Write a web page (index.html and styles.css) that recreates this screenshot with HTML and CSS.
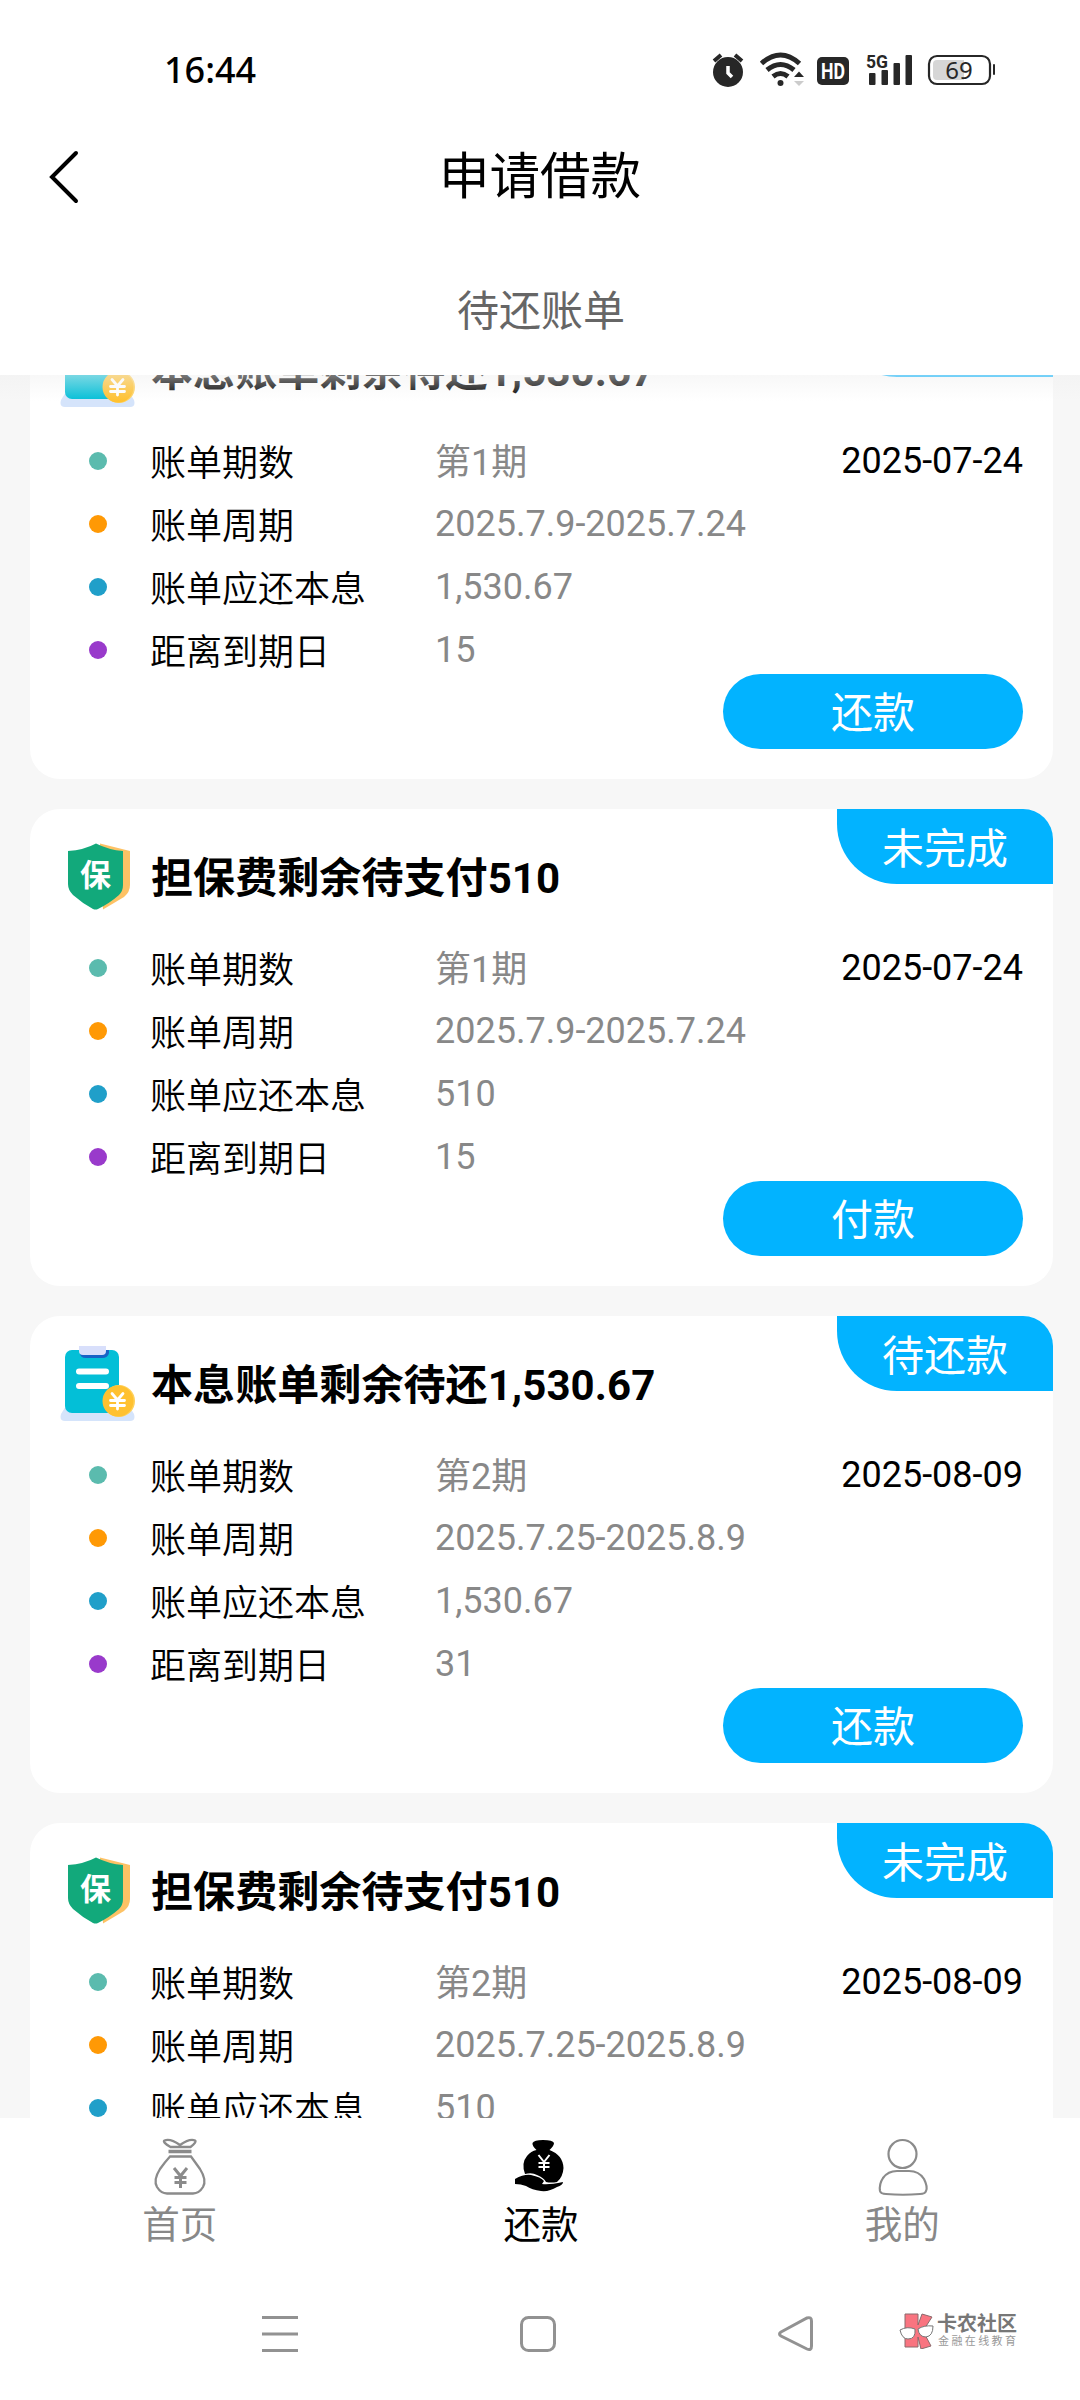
FILE: index.html
```html
<!DOCTYPE html>
<html lang="zh-CN">
<head>
<meta charset="utf-8">
<title>申请借款</title>
<link rel="stylesheet" href="styles.css">
</head>
<body>
<svg class="defs" aria-hidden="true">
  <symbol id="icon-bill" viewBox="0 0 75 75">
    <path d="M6 60H69L74 68Q76 75 70 75H5Q-1 75 1 68Z" fill="#d5e4fb"/>
    <rect x="5" y="4" width="54" height="63" rx="7" fill="#03bfd7"/>
    <path d="M20 4H49V7Q48 12 42 12H26Q20 12 20 7Z" fill="#1763c6"/>
    <path d="M19 0H46V5Q46 9 42 9H23Q19 9 19 5Z" fill="#d8dffb"/>
    <path d="M19 25.500H46M19 40H46" stroke="#fff" stroke-width="6" stroke-linecap="round"/>
    <circle cx="59" cy="55" r="16" fill="#ffd15c"/>
    <circle cx="58" cy="55" r="15.500" fill="#ffc130"/>
    <path d="M52 47.500L57.500 54L63 47.500M57.500 54V63M50.500 54.500H64.500M50.500 59.500H64.500" fill="none" stroke="#fff" stroke-width="2.800" stroke-linecap="round"/>
  </symbol>
  <symbol id="icon-shield" viewBox="0 0 75 75">
    <path d="M40 4.500L70 12V46Q70 53 64 58L43 70.500Z" fill="#fdc265"/>
    <path d="M36 4.500Q49 11 63 12V46Q63 52 59 56Q50 64 38 70Q35.500 71 33 70Q22 64 13 56Q8 51 8 45V12Q24 11 36 4.500Z" fill="#12a97b"/>
    <text class="shield-text" x="35.500" y="47" text-anchor="middle">保</text>
  </symbol>
</svg>

<header class="header">
  <div class="status">
    <span class="clock">16:44</span>
    <svg class="status-icons" width="290" height="40" viewBox="710 48 290 40">
      <g fill="#272727">
        <circle cx="728" cy="71" r="15"/>
        <path d="M714 60L721 54M742 60L735 54" stroke="#272727" stroke-width="4"/>
        <path d="M728 65V72L732 76" fill="none" stroke="#fff" stroke-width="3.500"/>
        <g fill="none" stroke="#272727" stroke-width="5">
          <path d="M761.500 62.500Q780.500 45.500 799.500 62.500M767 69Q780.500 58 794 69M773 75.500Q780.500 69.500 788 75.500"/>
        </g>
        <circle cx="780.500" cy="82" r="3"/>
        <path d="M794 76L799 70.500L804 76Z"/>
        <path d="M794 80L799 85L804 80Z" fill="#ccc"/>
        <rect x="817" y="56" width="32" height="28" rx="5"/>
        <rect x="869" y="72" width="6.500" height="12" rx="1"/>
        <rect x="881.500" y="69" width="6.500" height="15" rx="1"/>
        <rect x="893.500" y="62" width="6.500" height="22" rx="1"/>
        <rect x="905.500" y="54" width="6.500" height="30" rx="1"/>
        <rect x="993" y="63" width="2" height="11" rx="1"/>
      </g>
      <rect x="929" y="55" width="61" height="28" rx="8" fill="#fff" stroke="#272727" stroke-width="2.200"/>
      <path d="M937 59H964V79H937Q933 79 933 75V63Q933 59 937 59Z" fill="#d6d6d6"/>
      <text class="hd" x="833" y="78" text-anchor="middle" textLength="24" lengthAdjust="spacingAndGlyphs">HD</text>
      <text class="fiveg" x="866" y="66.500" textLength="22" lengthAdjust="spacingAndGlyphs">5G</text>
      <text class="battery" x="959" y="78" text-anchor="middle">69</text>
    </svg>
  </div>
  <div class="title-bar">
    <svg class="back" width="32" height="54" viewBox="0 0 32 54"><path d="M28 3L4 27L28 51" fill="none" stroke="#000" stroke-width="4" stroke-linecap="round"/></svg>
    <h1 class="page-title">申请借款</h1>
  </div>
  <div class="tab">待还账单</div>
</header>

<main class="list">
  <div class="fade"></div>
  <section class="card">
    <div class="badge">待还款</div>
    <div class="card-head"><svg class="card-icon"><use href="#icon-bill"/></svg><h2 class="card-title">本息账单剩余待还1,530.67</h2></div>
    <div class="rows">
      <div class="row"><i class="dot teal"></i><span class="label">账单期数</span><span class="value term">第1期</span><span class="date">2025-07-24</span></div>
      <div class="row"><i class="dot orange"></i><span class="label">账单周期</span><span class="value">2025.7.9-2025.7.24</span></div>
      <div class="row"><i class="dot blue"></i><span class="label">账单应还本息</span><span class="value">1,530.67</span></div>
      <div class="row"><i class="dot purple"></i><span class="label">距离到期日</span><span class="value">15</span></div>
    </div>
    <div class="pay">还款</div>
  </section>
  <section class="card">
    <div class="badge">未完成</div>
    <div class="card-head"><svg class="card-icon"><use href="#icon-shield"/></svg><h2 class="card-title">担保费剩余待支付510</h2></div>
    <div class="rows">
      <div class="row"><i class="dot teal"></i><span class="label">账单期数</span><span class="value term">第1期</span><span class="date">2025-07-24</span></div>
      <div class="row"><i class="dot orange"></i><span class="label">账单周期</span><span class="value">2025.7.9-2025.7.24</span></div>
      <div class="row"><i class="dot blue"></i><span class="label">账单应还本息</span><span class="value">510</span></div>
      <div class="row"><i class="dot purple"></i><span class="label">距离到期日</span><span class="value">15</span></div>
    </div>
    <div class="pay">付款</div>
  </section>
  <section class="card">
    <div class="badge">待还款</div>
    <div class="card-head"><svg class="card-icon"><use href="#icon-bill"/></svg><h2 class="card-title">本息账单剩余待还1,530.67</h2></div>
    <div class="rows">
      <div class="row"><i class="dot teal"></i><span class="label">账单期数</span><span class="value term">第2期</span><span class="date">2025-08-09</span></div>
      <div class="row"><i class="dot orange"></i><span class="label">账单周期</span><span class="value">2025.7.25-2025.8.9</span></div>
      <div class="row"><i class="dot blue"></i><span class="label">账单应还本息</span><span class="value">1,530.67</span></div>
      <div class="row"><i class="dot purple"></i><span class="label">距离到期日</span><span class="value">31</span></div>
    </div>
    <div class="pay">还款</div>
  </section>
  <section class="card">
    <div class="badge">未完成</div>
    <div class="card-head"><svg class="card-icon"><use href="#icon-shield"/></svg><h2 class="card-title">担保费剩余待支付510</h2></div>
    <div class="rows">
      <div class="row"><i class="dot teal"></i><span class="label">账单期数</span><span class="value term">第2期</span><span class="date">2025-08-09</span></div>
      <div class="row"><i class="dot orange"></i><span class="label">账单周期</span><span class="value">2025.7.25-2025.8.9</span></div>
      <div class="row"><i class="dot blue"></i><span class="label">账单应还本息</span><span class="value">510</span></div>
    </div>
  </section>
</main>

<nav class="tabbar">
  <div class="tab-item">
    <svg width="60" height="60" viewBox="0 0 60 60" fill="none" stroke="#8b8b8b" stroke-width="2.300">
      <path d="M20.500 10Q12 5 14.500 3.500Q20 1 30 8Q40 1 45 3.500Q47 5 40.500 10Z"/>
      <path d="M18.500 14.500H41.500" stroke-width="3.500"/>
      <path d="M20 19.500H41Q45 25 50 32Q57 43 53 50Q49 56.500 43 56.500H17Q11 56.500 7 50Q3 43 10 32Q15 25 20 19.500Z"/>
      <path d="M24 31L30.500 39L37 31M30.500 39V51M24.500 40.500H36.500M24.500 45.500H36.500" stroke-width="3"/>
    </svg>
    <span>首页</span>
  </div>
  <div class="tab-item active">
    <svg width="60" height="60" viewBox="-3 0 60 60" fill="#000">
      <path d="M22.500 13Q18 9 18.500 6Q20 3 29 3Q39 3 40 6Q40 9 35.500 13Q49 18 49.500 31Q49 40 43 45Q37 46 32 45Q30 41 23 38Q18 35 11 37Q7 26 13 19Q17 14 22.500 13Z"/>
      <path d="M1 42Q10 37 17 38Q27 40 30 44L28 47Q35 48 49 45Q49 48 43 50Q35 55 27 54Q18 53 12 49Q7 47 1 47Z"/>
      <path d="M24.500 18L30 25L35.500 18M30 25V34M24.500 26H35.500M24.500 30H35.500" fill="none" stroke="#fff" stroke-width="2"/>
    </svg>
    <span>还款</span>
  </div>
  <div class="tab-item">
    <svg width="60" height="60" viewBox="0 0 60 60" fill="none" stroke="#8b8b8b" stroke-width="2.200">
      <circle cx="32.500" cy="17" r="14"/>
      <path d="M27 34H39Q49 34 54 42Q58 50 56 54Q55 57 50 57Q33 58.500 16 57Q11 57 10 54Q9 47 13 41Q18 34 27 34Z"/>
    </svg>
    <span class="mine">我的</span>
  </div>
</nav>

<footer class="sysnav">
  <svg width="552" height="38" viewBox="261 2315 552 38" fill="none" stroke="#929292" stroke-width="3">
    <path d="M262 2317.500H298M262 2334H298M262 2350.500H298"/>
    <rect x="521.500" y="2317.500" width="33" height="33" rx="7"/>
    <path d="M781 2332L807 2318Q811.500 2316.500 811.500 2321V2346Q811.500 2351 807 2349L781 2336Q778 2334 781 2332Z"/>
  </svg>
  <div class="brand">
    <svg width="36" height="36" viewBox="0 0 36 36">
      <path d="M6 1H19V12L23 1L33 4L24 18L32 33L22 36L19 24V34H6Z" fill="#f97480" stroke="#8a6a6c" stroke-width="1"/>
      <path d="M1 17Q8 13 16 16Q17 26 9 26Q3 26 1 17ZM19 16Q25 12 34 13Q34 23 27 24Q20 24 19 16Z" fill="#fff" stroke="#777" stroke-width="1"/>
    </svg>
    <div class="brand-text"><b>卡农社区</b><span>金融在线教育</span></div>
  </div>
</footer>
</body>
</html>
```

FILE: styles.css
```css
* { box-sizing: border-box; }
body {
  margin: 0;
  width: 1080px;
  height: 2400px;
  overflow: hidden;
  display: flex;
  flex-direction: column;
  background: #fff;
  color: #000;
  font-family: Roboto, "Noto Sans CJK SC", sans-serif;
}
h1, h2 { margin: 0; }
.defs { position: absolute; width: 0; height: 0; }

.header { height: 375px; flex: none; background: #fff; }
.status {
  height: 136px;
  padding: 2px 80px 0 164px;
  display: flex;
  align-items: center;
  justify-content: space-between;
}
.clock { font: 500 36px "Noto Sans", sans-serif; }
.hd { font: 700 22px Roboto, sans-serif; fill: #fff; }
.fiveg { font: 700 19px Roboto, sans-serif; fill: #272727; }
.battery { font: 400 24px "Noto Sans", sans-serif; fill: #272727; }
.title-bar {
  height: 82px;
  padding: 0 48px;
  display: grid;
  grid-template-columns: 32px 1fr 32px;
  align-items: center;
}
.page-title { font-size: 50.5px; line-height: 82px; font-weight: 400; text-align: center; }
.tab { padding: 63px 0 0 2px; font-size: 42px; line-height: 62px; text-align: center; color: #666; }

.list {
  position: relative;
  height: 1743px;
  flex: none;
  overflow: hidden;
  padding: 0 27px 0 30px;
  background: #f7f7f7;
  display: flex;
  flex-direction: column;
  gap: 30px;
}
.fade {
  position: absolute;
  left: 0;
  right: 0;
  top: 0;
  height: 26px;
  z-index: 2;
  background: linear-gradient(rgba(240, 240, 240, .5), rgba(248, 248, 248, 0));
}
.card {
  position: relative;
  flex: none;
  height: 477px;
  padding: 30px 30px 0;
  border-radius: 30px;
  background: #fff;
}
.card:first-of-type { margin-top: -73px; }
.badge {
  position: absolute;
  right: 0;
  top: 0;
  width: 216px;
  height: 75px;
  border-radius: 0 30px 0 60px;
  background: #02b3ff;
  color: #fff;
  font-size: 42px;
  line-height: 81px;
  text-align: center;
}
.card-head { display: flex; align-items: center; gap: 16px; height: 75px; }
.card-icon { width: 75px; height: 75px; }
.shield-text { font: 700 31px "Noto Sans CJK SC", sans-serif; fill: #fff; }
.card-title { padding-top: 4px; font-size: 42px; line-height: 62px; font-weight: 700; letter-spacing: .08px; }
.rows { padding: 22px 0 0 29px; }
.row {
  display: grid;
  grid-template-columns: 61px 285px 1fr auto;
  align-items: center;
  height: 63px;
  font-size: 36px;
  line-height: 54px;
}
.dot { width: 18px; height: 18px; border-radius: 50%; }
.teal { background: #5bbbae; }
.orange { background: #ff9905; }
.blue { background: #209fc9; }
.purple { background: #993acb; }
.label { padding-top: 6px; font-weight: 350; }
.value { color: #888; }
.term { padding-top: 5px; }
.pay {
  width: 300px;
  height: 75px;
  margin: -7px 0 0 auto;
  border-radius: 38px;
  background: #02b3ff;
  color: #fff;
  font-size: 42px;
  line-height: 79px;
  text-align: center;
}

.tabbar { height: 142px; flex: none; display: flex; background: #fff; }
.tab-item {
  flex: 1;
  display: flex;
  flex-direction: column;
  align-items: center;
  padding-top: 19px;
  color: #888;
  font-size: 37.5px;
  line-height: 56px;
}
.tab-item svg { display: block; flex: none; }
.active { color: #000; padding-left: 2px; }
.mine { padding-left: 4px; }

.sysnav {
  height: 140px;
  padding: 53px 63px 0 261px;
  display: flex;
  justify-content: space-between;
  align-items: flex-start;
}
.sysnav svg { flex: none; margin-top: 2px; }
.brand { display: flex; gap: 2px; }
.brand svg { margin-top: 0; }
.brand-text {
  width: 80px;
  display: flex;
  flex-direction: column;
  color: #777;
  font-family: "Noto Sans CJK SC", sans-serif;
  white-space: nowrap;
}
.brand-text b { font-size: 20px; line-height: 19px; font-weight: 700; }
.brand-text span { padding-left: 1px; font-size: 11px; line-height: 17px; letter-spacing: 2.4px; color: #999; }
```
